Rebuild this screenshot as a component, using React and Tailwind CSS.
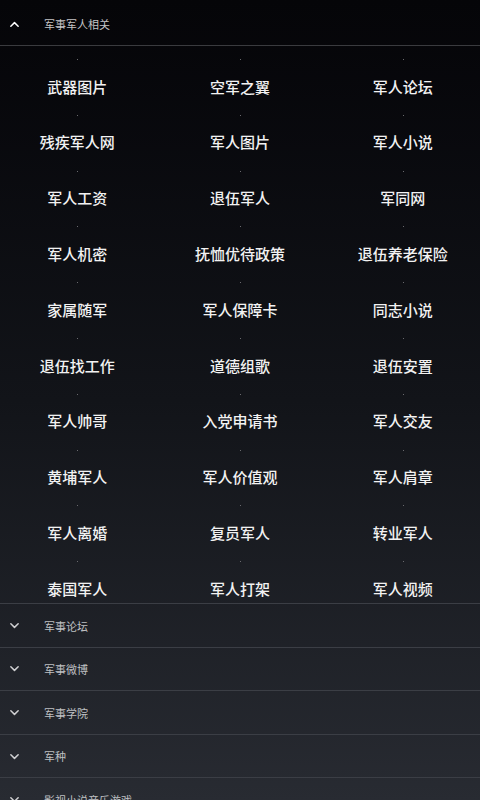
import React from 'react';

const items = [
  '武器图片', '空军之翼', '军人论坛',
  '残疾军人网', '军人图片', '军人小说',
  '军人工资', '退伍军人', '军同网',
  '军人机密', '抚恤优待政策', '退伍养老保险',
  '家属随军', '军人保障卡', '同志小说',
  '退伍找工作', '道德组歌', '退伍安置',
  '军人帅哥', '入党申请书', '军人交友',
  '黄埔军人', '军人价值观', '军人肩章',
  '军人离婚', '复员军人', '转业军人',
  '泰国军人', '军人打架', '军人视频',
];

const sections = ['军事论坛', '军事微博', '军事学院', '军种', '影视小说音乐游戏'];

const Chevron = ({ up, className }) => (
  <svg viewBox="0 0 12 8" className={className} fill="none" stroke="currentColor" strokeWidth="1.6" strokeLinecap="round" strokeLinejoin="round">
    {up ? <path d="M2 6.5L6 2.5L10 6.5" /> : <path d="M2 1.5L6 5.5L10 1.5" />}
  </svg>
);

const App = () => {
  return (
    <div
      className="w-[480px] h-[800px] overflow-hidden flex flex-col bg-gradient-to-b from-[#050508] via-[#121419] to-[#282b32]"
      style={{ fontFamily: '"Noto Sans CJK SC", "Noto Sans", sans-serif' }}
    >
      <div className="h-[46px] shrink-0 flex items-center pt-[3px] border-b border-[#3a3b3f]">
        <div className="w-[44px] pl-[9px]">
          <Chevron up className="w-[11px] h-[8px] text-white" />
        </div>
        <span className="text-[11px] text-[#c4c4c6]">军事军人相关</span>
      </div>
      <div className="h-[557px] shrink-0 overflow-hidden pt-[13px]">
        <div className="grid grid-cols-3 gap-x-[8px]">
          {items.map((item) => (
            <div key={item} className="relative h-[55.8px] flex items-center justify-center">
              <div className="absolute top-0 left-1/2 w-[1px] h-[1px] bg-[#6a6a6e]" />
              <span className="text-[15px] font-medium text-[#f2f2f2]">{item}</span>
            </div>
          ))}
        </div>
      </div>
      {sections.map((s) => (
        <div key={s} className="h-[43.6px] shrink-0 flex items-center pt-[1px] border-t border-[#3b3e45]">
          <div className="w-[44px] pl-[9px]">
            <Chevron className="w-[11px] h-[8px] text-[#d0d0d2]" />
          </div>
          <span className="text-[11px] text-[#bfc0c3]">{s}</span>
        </div>
      ))}
    </div>
  );
};

export default App;
